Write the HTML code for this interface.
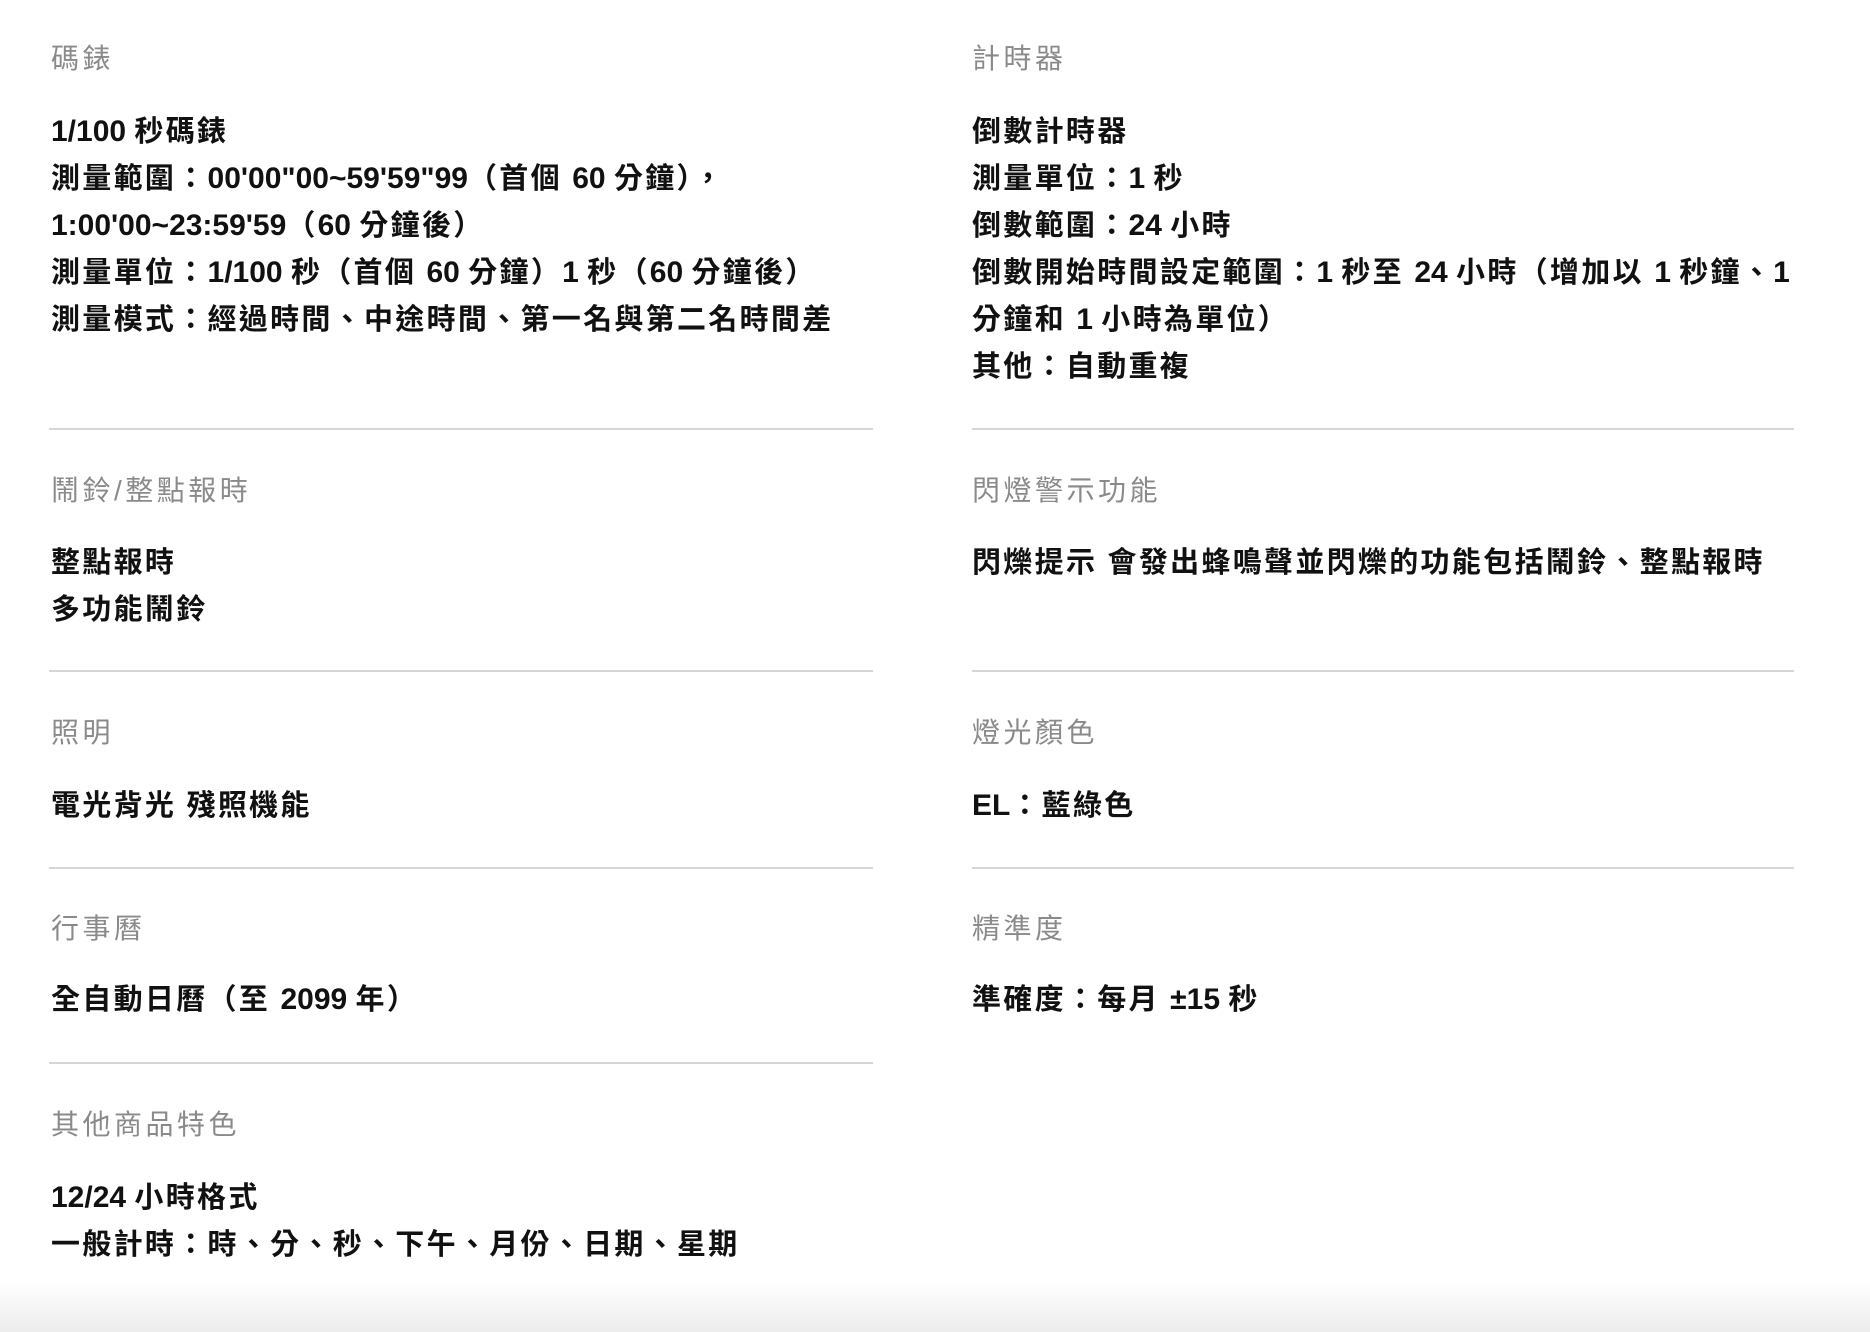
<!DOCTYPE html>
<html><head><meta charset="utf-8">
<style>
html,body{margin:0;padding:0;}
body{width:1870px;height:1332px;position:relative;overflow:hidden;background:#fff;
font-family:"Liberation Sans","Noto Sans CJK TC",sans-serif;}
.l{position:absolute;font-size:28px;color:#8a8a8a;letter-spacing:3.5px;line-height:48px;white-space:nowrap;}
.t{position:absolute;font-size:29px;font-weight:bold;color:#111;letter-spacing:2.3px;line-height:47px;white-space:nowrap;}
.t div{height:47px;}
.n{font-family:"Liberation Sans Narrow","Liberation Sans",sans-serif;letter-spacing:0;font-size:30px;line-height:0;}
.d{position:absolute;height:2px;background:#d6d6d6;}
.fade{position:absolute;left:0;right:0;bottom:0;height:50px;background:linear-gradient(#fff,#ececec);}
</style></head><body>
<div class="l" style="left:51px;top:35px">碼錶</div>
<div class="t" style="left:51px;top:109px"><div><span class="n">1/100 </span>秒碼錶</div><div>測量範圍：<span class="n">00'00"00~59'59"99</span>（首個 <span class="n">60 </span>分鐘），</div><div><span class="n">1:00'00~23:59'59</span>（<span class="n">60 </span>分鐘後）</div><div>測量單位：<span class="n">1/100 </span>秒（首個 <span class="n">60 </span>分鐘）<span class="n">1 </span>秒（<span class="n">60 </span>分鐘後）</div><div>測量模式：經過時間、中途時間、第一名與第二名時間差</div></div>
<div class="l" style="left:972px;top:35px">計時器</div>
<div class="t" style="left:972px;top:109px"><div>倒數計時器</div><div>測量單位：<span class="n">1 </span>秒</div><div>倒數範圍：<span class="n">24 </span>小時</div><div>倒數開始時間設定範圍：<span class="n">1 </span>秒至 <span class="n">24 </span>小時（增加以 <span class="n">1 </span>秒鐘、<span class="n">1</span></div><div>分鐘和 <span class="n">1 </span>小時為單位）</div><div>其他：自動重複</div></div>
<div class="d" style="left:49px;width:824px;top:428px"></div>
<div class="d" style="left:972px;width:822px;top:428px"></div>

<div class="l" style="left:51px;top:467px">鬧鈴/整點報時</div>
<div class="t" style="left:51px;top:540px"><div>整點報時</div><div>多功能鬧鈴</div></div>
<div class="l" style="left:972px;top:467px">閃燈警示功能</div>
<div class="t" style="left:972px;top:540px"><div>閃爍提示 會發出蜂鳴聲並閃爍的功能包括鬧鈴、整點報時</div></div>
<div class="d" style="left:49px;width:824px;top:670px"></div>
<div class="d" style="left:972px;width:822px;top:670px"></div>

<div class="l" style="left:51px;top:709px">照明</div>
<div class="t" style="left:51px;top:783px"><div>電光背光 殘照機能</div></div>
<div class="l" style="left:972px;top:709px">燈光顏色</div>
<div class="t" style="left:972px;top:783px"><div><span class="n">EL</span>：藍綠色</div></div>
<div class="d" style="left:49px;width:824px;top:867px"></div>
<div class="d" style="left:972px;width:822px;top:867px"></div>

<div class="l" style="left:51px;top:905px">行事曆</div>
<div class="t" style="left:51px;top:977px"><div>全自動日曆（至 <span class="n">2099 </span>年）</div></div>
<div class="l" style="left:972px;top:905px">精準度</div>
<div class="t" style="left:972px;top:977px"><div>準確度：每月 <span class="n">±15 </span>秒</div></div>
<div class="d" style="left:49px;width:824px;top:1062px"></div>

<div class="l" style="left:51px;top:1101px">其他商品特色</div>
<div class="t" style="left:51px;top:1175px"><div><span class="n">12/24 </span>小時格式</div><div>一般計時：時、分、秒、下午、月份、日期、星期</div></div>
<div class="fade"></div>
</body></html>
